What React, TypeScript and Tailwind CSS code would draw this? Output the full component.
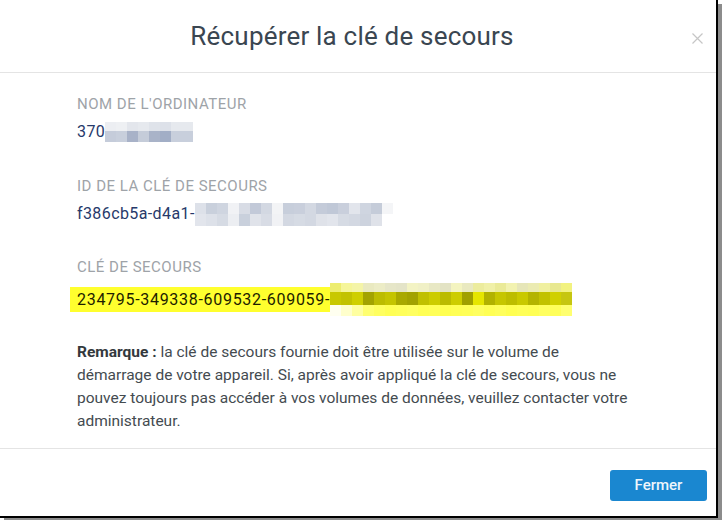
import React from "react";

// pixelated blur rows: each row is a list of cell colours
const NAME_BLUR = [
  ["#eceef2", "#eef0f3", "#e3e6ec", "#e6e9ee", "#dfe3ea", "#dde1e9", "#e6e9ee", "#e6e9ee"],
  ["#c5ccda", "#c8cfdc", "#a8b2c8", "#c5ccd9", "#a9b3c8", "#a2aec6", "#c8cfdc", "#c8cfdc"],
];

const ID_BLUR = [
  ["#dde1e9", "#c9d0dc", "#cfd5e0", "#f1f2f5", "#d8dce5", "#c2c9d8", "#d3d8e2", "#f3f4f6", "#c7cedb", "#c9cfdc", "#d3d8e2", "#c4cbd9", "#c0c8d7", "#c9cfdc", "#e2e5ec", "#cfd5e0", "#c5ccd9", "#f4f5f7"],
  ["#e2e5ec", "#dde1e9", "#d6dbe4", "#eceef2", "#c9d0dc", "#e0e3ea", "#d8dce5", "#f1f2f5", "#d3d8e2", "#d6dbe4", "#d3d8e2", "#dfe2e9", "#e2e5ec", "#d6dbe4", "#d3d8e2", "#cdd3de", "#dfe2e9", "#ffffff"],
];

const KEY_BLUR = [
  ["#eded70", "#f5f59a", "#f4f4a8", "#e9e9c0", "#ececc6", "#e6e6c8", "#e4e4c8", "#f3f3c4", "#f0f0c6", "#e8e8c4", "#e3e3c4", "#f4f4c0", "#e9e9c0", "#ecec9e", "#f0f0a8", "#eaea98", "#f2f2b0", "#e6e6b8", "#ebebb2", "#f0f0a0", "#e8e890", "#f2f280"],
  ["#c8c800", "#c2c200", "#cfcf00", "#a3a300", "#bcbc00", "#c4c400", "#a9a900", "#a2a200", "#c0c000", "#cccc00", "#bbbb00", "#cdcd00", "#a0a000", "#e6e600", "#b2b200", "#c6c600", "#bdbd00", "#c9c900", "#b4b400", "#c2c200", "#d0d000", "#c6c610"],
  ["#fffff0", "#ffffcc", "#ffffa0", "#ffff70", "#ffff60", "#ffff55", "#ffff5a", "#ffff60", "#ffff55", "#ffff58", "#ffff50", "#ffff55", "#ffff58", "#ffff60", "#ffff55", "#ffff5c", "#ffff52", "#ffff58", "#ffff55", "#ffff60", "#ffff5a", "#ffff70"],
];

function Pixels({ rows, heights }: { rows: string[][]; heights: number[] }) {
  return (
    <div className="flex flex-col">
      {rows.map((row, i) => (
        <div key={i} className="flex">
          {row.map((c, j) => (
            <div key={j} className="w-[11px]" style={{ background: c, height: heights[i] }} />
          ))}
        </div>
      ))}
    </div>
  );
}

const label = "text-[15px] leading-[20px] tracking-[0.5px] text-[#9ea3a8]";
const value = "text-[16px] tracking-[0.4px] text-[#27396a]";

export default function App() {
  return (
    <div className="h-[520px] w-[722px] bg-white font-['Roboto','Noto_Sans',sans-serif]">
      <div className="flex h-[518px] w-[718px] flex-col border-b-2 border-r-2 border-black bg-white shadow-[4px_4px_0_#8c8c8c]">
        <div className="relative flex h-[73px] shrink-0 items-center justify-center border-b border-[#e4e4e4] pr-[12px]">
          <h2 className="text-[26px] font-normal tracking-[0.2px] text-[#3a4651]">Récupérer la clé de secours</h2>
          <svg className="absolute right-[13px] top-[33px]" width="11" height="11" viewBox="0 0 11 11">
            <path d="M0.5 0.5 L10.5 10.5 M10.5 0.5 L0.5 10.5" stroke="#c6c6c6" strokeWidth="1.2" />
          </svg>
        </div>

        <div className="flex-1 pl-[77px] pt-[21px]">
          <div className={label}>NOM DE L'ORDINATEUR</div>
          <div className="mt-[7px] flex h-[22px] items-center">
            <span className={value}>370</span>
            <Pixels rows={NAME_BLUR} heights={[9, 11]} />
          </div>

          <div className={`mt-[33px] ${label}`}>ID DE LA CLÉ DE SECOURS</div>
          <div className="mt-[6px] flex h-[24px] items-center">
            <span className={value}>f386cb5a-d4a1-</span>
            <Pixels rows={ID_BLUR} heights={[11, 12]} />
          </div>

          <div className={`mt-[31px] ${label}`}>CLÉ DE SECOURS</div>
          <div className="-ml-[7px] mt-[6px] flex h-[33px] w-fit items-center">
            <div className="flex h-[25px] items-center bg-[#ffff2e] pl-[7px]">
              <span className="text-[16px] tracking-[0.7px] text-[#1d1d00]">234795-349338-609532-609059-</span>
            </div>
            <Pixels rows={KEY_BLUR} heights={[9, 13, 11]} />
          </div>

          <p className="mt-[25px] whitespace-nowrap text-[15.5px] leading-[23px] text-[#444b50]">
            <span className="font-bold text-[#33393d]">Remarque :</span> la clé de secours fournie doit être utilisée sur le volume de
            <br />
            démarrage de votre appareil. Si, après avoir appliqué la clé de secours, vous ne
            <br />
            pouvez toujours pas accéder à vos volumes de données, veuillez contacter votre
            <br />
            administrateur.
          </p>
        </div>

        <div className="flex h-[68px] shrink-0 items-start justify-end border-t border-[#e4e4e4] pr-[9px] pt-[21px]">
          <button className="h-[31px] w-[97px] rounded-[3px] bg-[#1a87d0] text-[15px] font-medium text-[#eef6fc]">Fermer</button>
        </div>
      </div>
    </div>
  );
}
